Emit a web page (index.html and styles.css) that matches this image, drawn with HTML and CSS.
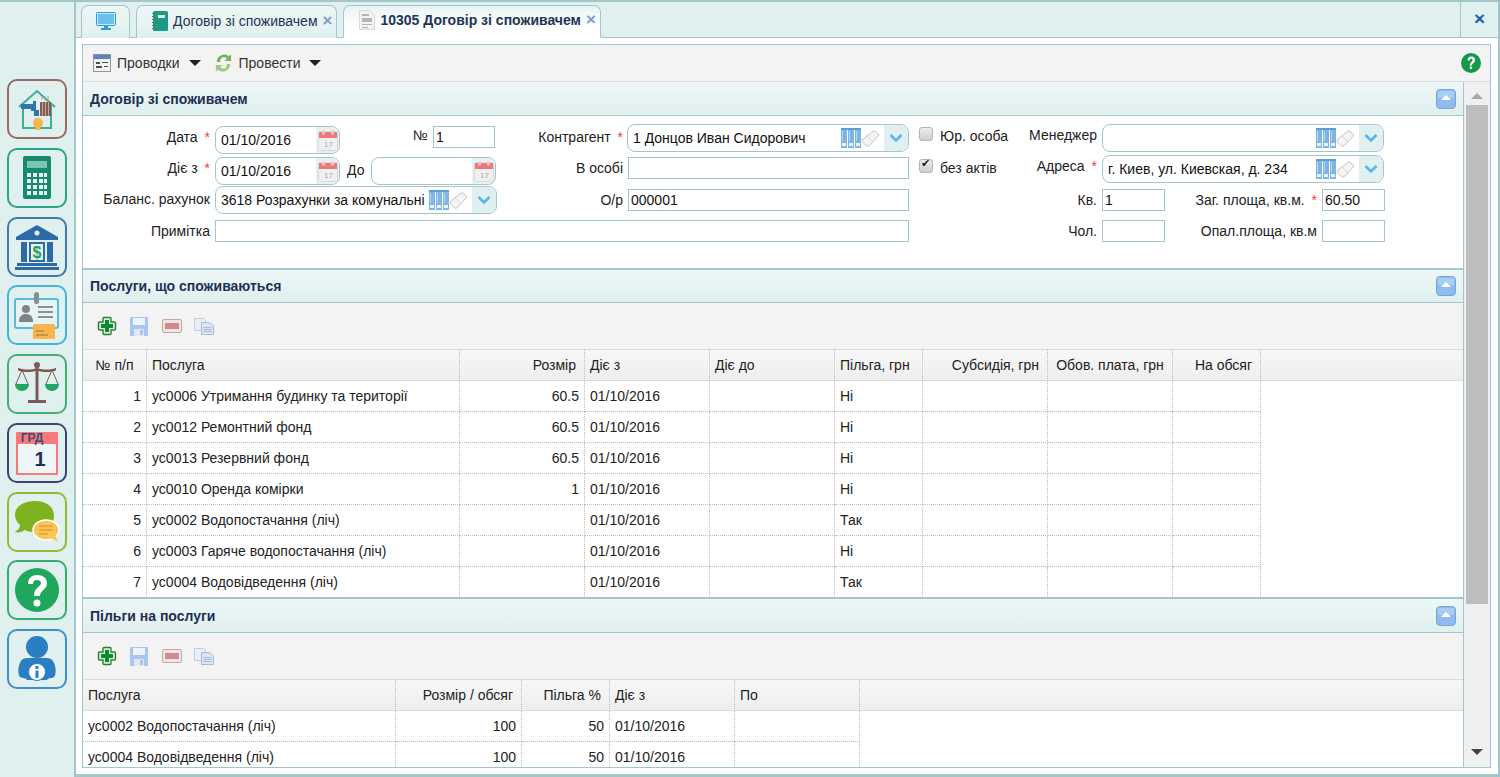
FILE: index.html
```html
<!DOCTYPE html>
<html lang="uk">

<head>
    <meta charset="utf-8">
    <title>10305 Договір зі споживачем</title>
    <link rel="stylesheet" href="styles.css">
</head>

<body>
    <!-- Shared small icons -->
    <svg class="defs" width="0" height="0">
        <symbol id="i-binders" viewBox="0 0 20 20">
            <path d="M0 0h20v2H0z" fill="#5a9fd8"/>
            <path d="M0 2h6v18H0zM7 2h6v18H7zM14 2h6v18h-6z" fill="#7db5e6"/>
            <path d="M1 3h1v10H1zM8 3h1v10H8zM15 3h1v10h-1z" fill="#b9d9f3"/>
            <path d="M1 15h4v3H1zM8 15h4v3H8zM15 15h4v3h-4z" fill="#eaf4fb"/>
        </symbol>
        <symbol id="i-eraser" viewBox="0 0 20 20">
            <path d="M13 2.5l5 4.500-9.500 10.500a2.500 2.500 0 0 1-3.500 0l-3-3a2.500 2.500 0 0 1 0-3.500z" fill="#f4f4f4" stroke="#c2c2c2"/>
            <path d="M6 8l6 6" stroke="#d6d6d6" fill="none"/>
        </symbol>
        <symbol id="i-chevron" viewBox="0 0 14 10">
            <path d="M1.500 2l5.500 5.500L12.500 2" fill="none" stroke="#58b4ea" stroke-width="2.600"/>
        </symbol>
        <symbol id="i-cal" viewBox="0 0 20 21">
            <rect x="0.500" y="2" width="19" height="18.500" rx="1" fill="#f0f0f0" stroke="#d8d8d8"/>
            <path d="M1 2h18v6H1z" fill="#e87b7b"/>
            <path d="M4 0.500h3v4H4zM13 0.500h3v4h-3z" fill="#f4c0c0"/>
            <text x="6" y="17" font-size="8" font-family="Liberation Sans, sans-serif" fill="#a8a8a8">17</text>
        </symbol>
        <symbol id="i-plus" viewBox="0 0 20 20">
            <path d="M7 1.500h6a1 1 0 0 1 1 1V6h3.500a1 1 0 0 1 1 1v6a1 1 0 0 1-1 1H14v3.500a1 1 0 0 1-1 1H7a1 1 0 0 1-1-1V14H2.500a1 1 0 0 1-1-1V7a1 1 0 0 1 1-1H6V2.500a1 1 0 0 1 1-1z" fill="#d8ecd8" stroke="#2e7d3e" stroke-width="1.400"/>
            <path d="M8 4h4v4h4v4h-4v4H8v-4H4V8h4z" fill="#0c8a2c"/>
        </symbol>
        <symbol id="i-floppy" viewBox="0 0 18 19">
            <path d="M0 0h18v19H0z" fill="#a9c6f2"/>
            <path d="M3 1h12v7H3z" fill="#eef4fc"/>
            <path d="M4 12h10v7H4z" fill="#dfe8f5"/>
            <path d="M10 13h3v5h-3z" fill="#a9c6f2"/>
        </symbol>
        <symbol id="i-minus" viewBox="0 0 20 14">
            <rect x="0.500" y="0.500" width="19" height="13" rx="1.500" fill="#f2e4e4" stroke="#c9a6a6"/>
            <path d="M3 4h14v6H3z" fill="#cf8a90"/>
        </symbol>
        <symbol id="i-copy" viewBox="0 0 20 17">
            <path d="M0.500 0.500h9l2 2v10H0.500z" fill="#e9eef8" stroke="#c3cde0"/>
            <path d="M7.500 4.500h8l4 3.500v8.500h-12z" fill="#dbe5f6" stroke="#a9b9d6"/>
            <path d="M9.500 9.500h8M9.500 11.500h8M9.500 13.500h8" stroke="#a9b9d6"/>
        </symbol>
        <symbol id="i-collapse" viewBox="0 0 20 20">
            <rect x="0.500" y="0.500" width="19" height="19" rx="3.500" fill="#8fbcf0" stroke="#7aa5dc"/>
            <path d="M2 2h16v7H2z" fill="#a9cdf5"/>
            <path d="M10 6l5 5H5z" fill="#fff"/>
        </symbol>
    </svg>

    <div class="app">
        <!-- Left menu -->
        <nav class="sidebar">
            <a class="side-btn side-house">
                <svg viewBox="0 0 48 48" width="48" height="48">
                    <path d="M6 22L24 6l18 16" fill="none" stroke="#3fae98" stroke-width="2"/>
                    <path d="M10 19v24h28V19" fill="none" stroke="#3fae98" stroke-width="2"/>
                    <path d="M8 19h12v-3h3v9h3v6h-5v-5h-3v-2H8z" fill="#2f74ad"/>
                    <path d="M23 33l2 4h-4z" fill="#2f74ad"/>
                    <path d="M27 17h11v14H27z" fill="#875a52"/>
                    <path d="M29.500 17v14M32.500 17v14M35.500 17v14" stroke="#c2a79f"/>
                    <path d="M29 15v-4M32 15v-4M35 15v-4" stroke="#b89a92"/>
                    <circle cx="25" cy="38" r="5" fill="#f6b54e"/>
                    <path d="M22.500 41h5v4h-5z" fill="#f6b54e"/>
                </svg>
            </a>
            <a class="side-btn side-calc">
                <svg viewBox="0 0 48 48" width="48" height="48">
                    <rect x="10" y="2" width="28" height="43" rx="2" fill="#17896f"/>
                    <path d="M14 7h20v7H14z" fill="#7cc4b2"/>
                    <path d="M14 19h4v4h-4zM20 19h4v4h-4zM26 19h4v4h-4zM31 19h3v4h-3zM14 25h4v4h-4zM20 25h4v4h-4zM26 25h4v4h-4zM31 25h3v4h-3zM14 31h4v4h-4zM20 31h4v4h-4zM26 31h4v4h-4zM31 31h3v4h-3zM14 37h4v4h-4zM20 37h4v4h-4zM26 37h4v4h-4zM31 37h3v4h-3z" fill="#e6f4f0"/>
                </svg>
            </a>
            <a class="side-btn side-bank">
                <svg viewBox="0 0 48 48" width="48" height="48">
                    <path d="M24 2L3 14v3h42v-3z" fill="#2f6aa8"/>
                    <circle cx="24" cy="10" r="2.500" fill="#e6f2f2"/>
                    <path d="M8 19h6v20H8zM34 19h6v20h-6zM16 19h16v20H16z" fill="#2f6aa8"/>
                    <path d="M18 21h12v16H18z" fill="#e6f2f2"/>
                    <path d="M4 40h40v3H4zM2 44h44v3H2z" fill="#2f6aa8"/>
                    <text x="24" y="35" text-anchor="middle" font-size="16" font-weight="700" font-family="Liberation Sans, sans-serif" fill="#2a9d5c">$</text>
                </svg>
            </a>
            <a class="side-btn side-card">
                <svg viewBox="0 0 48 48" width="48" height="48">
                    <rect x="2" y="8" width="43" height="29" rx="2" fill="#e6f4f6" stroke="#55bcdc" stroke-width="2"/>
                    <rect x="21" y="1" width="5" height="12" rx="2.500" fill="#8a8f93"/>
                    <circle cx="13" cy="18" r="4" fill="#7f8488"/>
                    <path d="M6 31c0-6 3-8 7-8s7 2 7 8z" fill="#7f8488"/>
                    <path d="M25 16h15M25 21h15M25 26h15" stroke="#8a8f93" stroke-width="2"/>
                    <rect x="20" y="33" width="22" height="15" rx="1.500" fill="#f6b54e"/>
                    <path d="M23 40h8M23 44h12" stroke="#b78a3a" stroke-width="1.500"/>
                </svg>
            </a>
            <a class="side-btn side-law">
                <svg viewBox="0 0 48 48" width="48" height="48">
                    <circle cx="24" cy="5" r="3" fill="#7d5a55"/>
                    <path d="M22.500 6h3v34h-3zM15 40h18v3H15z" fill="#7d5a55"/>
                    <path d="M5 8c8 2 12 2 19 0 7 2 11 2 19 0v2.500c-8 2-12 2-19 0-7 2-11 2-19 0z" fill="#7d5a55"/>
                    <path d="M9 10L3 24M9 10l6 14M39 10l-6 14M39 10l6 14" stroke="#7d5a55" fill="none"/>
                    <path d="M2 24h14c0 4-3 7-7 7s-7-3-7-7zM32 24h14c0 4-3 7-7 7s-7-3-7-7z" fill="#24a566"/>
                </svg>
            </a>
            <a class="side-btn side-cal">
                <svg viewBox="0 0 48 48" width="48" height="48">
                    <rect x="0" y="0" width="42" height="43" rx="1" transform="translate(3 3)" fill="#f67a7a"/>
                    <path d="M5 15h38v29H5z" fill="#eef5f6"/>
                    <text x="19" y="13" text-anchor="middle" font-size="12" font-family="Liberation Sans, sans-serif" font-weight="700" fill="#3b4a78">ГРД</text>
                    <text x="27" y="37" text-anchor="middle" font-size="20" font-family="Liberation Sans, sans-serif" font-weight="700" fill="#1f2f57">1</text>
                </svg>
            </a>
            <a class="side-btn side-chat">
                <svg viewBox="0 0 48 48" width="48" height="48">
                    <path d="M22 3c12 0 19 6 19 15 0 3-1 5-2 7H26c-4 3-5 7-5 9-4 0-7-1-9-2-3 2-7 3-10 2 3-2 5-4 5-7-3-3-5-6-5-10C2 9 10 3 22 3z" fill="#7cb31e"/>
                    <ellipse cx="33" cy="32" rx="13" ry="10" fill="#f8c656" stroke="#fff" stroke-width="1.500"/>
                    <path d="M38 40l7 4-3-7z" fill="#f8c656"/>
                    <path d="M26 28h14M26 32h14M26 36h9" stroke="#e0a02e" stroke-width="1.500"/>
                </svg>
            </a>
            <a class="side-btn side-help">
                <svg viewBox="0 0 48 48" width="48" height="48">
                    <circle cx="24" cy="24" r="22" fill="#1fa75e"/>
                    <path d="M15 18c0-6 4-9 9-9 6 0 10 3 10 8 0 7-7 7-7 13h-6c0-9 7-9 7-13 0-2-2-3-4-3-3 0-4 2-4 4z" fill="#fff"/>
                    <circle cx="24" cy="37" r="3.500" fill="#fff"/>
                </svg>
            </a>
            <a class="side-btn side-user">
                <svg viewBox="0 0 48 48" width="48" height="48">
                    <circle cx="24" cy="12" r="11" fill="#2a7fc4"/>
                    <path d="M7 42c-3-3-2-15 3-18 3-1.500 6-1 14-1s11-.5 14 1c5 3 6 15 3 18-2 2-5 0-7 3H14c-2-3-5-1-7-3z" fill="#2a7fc4"/>
                    <circle cx="24" cy="37" r="8.500" fill="#fff" stroke="#2a7fc4" stroke-width="1"/>
                    <path d="M22.500 35.500h3V43h-3zM22.500 31h3v3h-3z" fill="#2a7fc4"/>
                </svg>
            </a>
        </nav>

        <main class="main">
            <!-- Tabs -->
            <div class="tabstrip">
                <a class="tab tab-home">
                    <svg viewBox="0 0 20 18" width="20" height="18">
                        <rect x="0.500" y="0.500" width="19" height="13" rx="1" fill="#cdeaf8" stroke="#2f9bd8"/>
                        <path d="M2 2h16v10H2z" fill="#6cc0ea"/>
                        <path d="M8 14h4v2H8zM5 16h10v2H5z" fill="#2f9bd8"/>
                    </svg>
                </a>
                <a class="tab">
                    <svg viewBox="0 0 16 20" width="16" height="20">
                        <rect x="1" y="0" width="15" height="20" rx="1.500" fill="#1d9a86"/>
                        <path d="M0 2h3v1H0zM0 5h3v1H0zM0 8h3v1H0zM0 11h3v1H0zM0 14h3v1H0zM0 17h3v1H0z" fill="#5b7a76"/>
                        <path d="M6 4h7v3H6z" fill="#d8f0ea"/>
                    </svg>
                    <span class="tab-text">Договір зі споживачем</span>
                    <span class="tab-close">×</span>
                </a>
                <a class="tab tab-active">
                    <svg viewBox="0 0 16 20" width="16" height="20">
                        <path d="M0.500 0.500h10l5 5v14H0.500z" fill="#f3f3f3" stroke="#d8d8d8"/>
                        <path d="M3 4h7v2H3zM3 8h10v4H3zM3 14h10v1H3zM3 17h6v1H3z" fill="#b4b4b4"/>
                    </svg>
                    <span class="tab-text">10305 Договір зі споживачем</span>
                    <span class="tab-close">×</span>
                </a>
                <a class="strip-close">×</a>
            </div>

            <div class="doc">
                <div class="doc-toolbar">
                    <a class="tool">
                        <svg viewBox="0 0 18 18" width="18" height="18">
                            <rect x="0.500" y="0.500" width="17" height="17" fill="#f2f2f2" stroke="#8e97a6"/>
                            <path d="M1 1h16v4H1z" fill="#5e80c0"/>
                            <path d="M3 8h4v2H3zM9 8h6v1H9zM3 12h6v2H3zM11 12h4v1h-4z" fill="#4d4d4d"/>
                        </svg>
                        <span>Проводки</span>
                        <i class="caret"></i>
                    </a>
                    <a class="tool tool-post">
                        <svg viewBox="0 0 20 20" width="19" height="20">
                            <path d="M3 9c0-5 4-8 8-8 2 0 3.500 1 4.500 2L18 1v7h-7l2.500-2.500C12.500 4.500 11 4 10 4 8 4 6.500 6 6.500 9z" fill="#74b45c"/>
                            <path d="M17 11c0 5-4 8-8 8-2 0-3.500-1-4.500-2L2 19v-7h7l-2.500 2.500C7.500 15.500 9 16 10 16c2 0 3.500-2 3.500-5z" fill="#9ccb86"/>
                        </svg>
                        <span>Провести</span>
                        <i class="caret"></i>
                    </a>
                    <svg class="tool-help" viewBox="0 0 20 20" width="20" height="20">
                        <circle cx="10" cy="10" r="10" fill="#14984c"/>
                        <path d="M6.500 7.500C6.500 5 8 3.500 10.500 3.500S14 5 14 7c0 3-3 3-3 5.500H8.800C8.800 9 11.500 9 11.500 7.200c0-.8-.4-1.500-1.200-1.500-1 0-1.500.7-1.500 1.800z" fill="#fff"/>
                        <rect x="8.800" y="13.500" width="2.300" height="2.500" fill="#fff"/>
                    </svg>
                </div>

                <div class="doc-body">
                    <div class="sections">

                        <!-- Contract details -->
                        <section class="section">
                            <header class="section-head">
                                <h3>Договір зі споживачем</h3>
                                <svg class="collapse" width="20" height="20"><use href="#i-collapse"/></svg>
                            </header>
                            <div class="form">
                                <label class="lbl">Дата <b>*</b></label>
                                <div class="field date mt2"><input value="01/10/2016"><span class="cal-btn"><svg width="20" height="21"><use href="#i-cal"/></svg></span></div>
                                <div class="num-cell span2 mt2"><label class="lbl-num">№</label><input class="txt num" value="1"></div>
                                <label class="lbl">Контрагент <b>*</b></label>
                                <div class="field combo combo-left"><input value="1 Донцов Иван Сидорович"><svg class="ic" width="20" height="20"><use href="#i-binders"/></svg><svg class="ic" width="20" height="20"><use href="#i-eraser"/></svg><span class="drop"><svg width="14" height="10"><use href="#i-chevron"/></svg></span></div>
                                <div class="chk-cell"><label class="chk"><input type="checkbox">Юр. особа</label><label class="lbl-inline">Менеджер</label></div>
                                <div class="field combo span3"><input value=""><svg class="ic" width="20" height="20"><use href="#i-binders"/></svg><svg class="ic" width="20" height="20"><use href="#i-eraser"/></svg><span class="drop"><svg width="14" height="10"><use href="#i-chevron"/></svg></span></div>

                                <label class="lbl">Діє з <b>*</b></label>
                                <div class="field date mt2"><input value="01/10/2016"><span class="cal-btn"><svg width="20" height="21"><use href="#i-cal"/></svg></span></div>
                                <label class="lbl-do">До</label>
                                <div class="field date mt2"><input value=""><span class="cal-btn"><svg width="20" height="21"><use href="#i-cal"/></svg></span></div>
                                <label class="lbl">В особі</label>
                                <input class="txt mt2 wide" value="">
                                <div class="chk-cell"><label class="chk chk-2"><input type="checkbox" checked>без актів</label><label class="lbl-inline">Адреса <b>*</b></label></div>
                                <div class="field combo span3"><input value="г. Киев, ул. Киевская, д. 234"><svg class="ic" width="20" height="20"><use href="#i-binders"/></svg><svg class="ic" width="20" height="20"><use href="#i-eraser"/></svg><span class="drop"><svg width="14" height="10"><use href="#i-chevron"/></svg></span></div>

                                <label class="lbl">Баланс. рахунок</label>
                                <div class="field combo span3 balance"><input value="3618 Розрахунки за комунальні послуги"><svg class="ic" width="20" height="20"><use href="#i-binders"/></svg><svg class="ic" width="20" height="20"><use href="#i-eraser"/></svg><span class="drop"><svg width="14" height="10"><use href="#i-chevron"/></svg></span></div>
                                <label class="lbl lbl-low">О/р</label>
                                <input class="txt mt3 wide" value="000001">
                                <label class="lbl lbl-low">Кв.</label>
                                <input class="txt mt3 small" value="1">
                                <label class="lbl lbl-low">Заг. площа, кв.м. <b>*</b></label>
                                <input class="txt mt3 small" value="60.50">

                                <label class="lbl lbl-low">Примітка</label>
                                <input class="txt mt3 note" value="">
                                <label class="lbl lbl-low">Чол.</label>
                                <input class="txt mt3 small" value="">
                                <label class="lbl lbl-low">Опал.площа, кв.м</label>
                                <input class="txt mt3 small" value="">
                            </div>
                        </section>

                        <!-- Services -->
                        <section class="section">
                            <header class="section-head head-short">
                                <h3>Послуги, що споживаються</h3>
                                <svg class="collapse" width="20" height="20"><use href="#i-collapse"/></svg>
                            </header>
                            <div class="grid-tools">
                                <svg class="gt-plus" width="20" height="20"><use href="#i-plus"/></svg>
                                <svg class="gt-floppy" width="18" height="19"><use href="#i-floppy"/></svg>
                                <svg class="gt-minus" width="20" height="14"><use href="#i-minus"/></svg>
                                <svg class="gt-copy" width="20" height="17"><use href="#i-copy"/></svg>
                            </div>
                            <table class="grid">
                                <colgroup>
                                    <col class="w64"><col class="w313"><col class="w125"><col class="w125"><col class="w125"><col class="w88"><col class="w125"><col class="w125"><col class="w88"><col>
                                </colgroup>
                                <thead>
                                    <tr>
                                        <th class="c">№ п/п</th><th>Послуга</th><th class="r">Розмір</th><th>Діє з</th><th>Діє до</th><th>Пільга, грн</th><th class="r">Субсидія, грн</th><th class="c">Обов. плата, грн</th><th class="r">На обсяг</th><th class="fill"></th>
                                    </tr>
                                </thead>
                                <tbody>
                                    <tr><td class="n">1</td><td>ус0006 Утримання будинку та території</td><td class="n">60.5</td><td>01/10/2016</td><td></td><td>Ні</td><td></td><td></td><td></td></tr>
                                    <tr><td class="n">2</td><td>ус0012 Ремонтний фонд</td><td class="n">60.5</td><td>01/10/2016</td><td></td><td>Ні</td><td></td><td></td><td></td></tr>
                                    <tr><td class="n">3</td><td>ус0013 Резервний фонд</td><td class="n">60.5</td><td>01/10/2016</td><td></td><td>Ні</td><td></td><td></td><td></td></tr>
                                    <tr><td class="n">4</td><td>ус0010 Оренда комірки</td><td class="n">1</td><td>01/10/2016</td><td></td><td>Ні</td><td></td><td></td><td></td></tr>
                                    <tr><td class="n">5</td><td>ус0002 Водопостачання (ліч)</td><td class="n"></td><td>01/10/2016</td><td></td><td>Так</td><td></td><td></td><td></td></tr>
                                    <tr><td class="n">6</td><td>ус0003 Гаряче водопостачання (ліч)</td><td class="n"></td><td>01/10/2016</td><td></td><td>Ні</td><td></td><td></td><td></td></tr>
                                    <tr class="last"><td class="n">7</td><td>ус0004 Водовідведення (ліч)</td><td class="n"></td><td>01/10/2016</td><td></td><td>Так</td><td></td><td></td><td></td></tr>
                                </tbody>
                            </table>
                        </section>

                        <!-- Benefits -->
                        <section class="section section-end">
                            <header class="section-head">
                                <h3>Пільги на послуги</h3>
                                <svg class="collapse" width="20" height="20"><use href="#i-collapse"/></svg>
                            </header>
                            <div class="grid-tools">
                                <svg class="gt-plus" width="20" height="20"><use href="#i-plus"/></svg>
                                <svg class="gt-floppy" width="18" height="19"><use href="#i-floppy"/></svg>
                                <svg class="gt-minus" width="20" height="14"><use href="#i-minus"/></svg>
                                <svg class="gt-copy" width="20" height="17"><use href="#i-copy"/></svg>
                            </div>
                            <table class="grid">
                                <colgroup>
                                    <col class="w313"><col class="w126"><col class="w88"><col class="w125"><col class="w125"><col>
                                </colgroup>
                                <thead>
                                    <tr>
                                        <th>Послуга</th><th class="r">Розмір / обсяг</th><th class="r">Пільга %</th><th>Діє з</th><th>По</th><th class="fill"></th>
                                    </tr>
                                </thead>
                                <tbody>
                                    <tr><td>ус0002 Водопостачання (ліч)</td><td class="n">100</td><td class="n">50</td><td>01/10/2016</td><td></td></tr>
                                    <tr><td>ус0004 Водовідведення (ліч)</td><td class="n">100</td><td class="n">50</td><td>01/10/2016</td><td></td></tr>
                                </tbody>
                            </table>
                        </section>
                    </div>

                    <!-- Scrollbar -->
                    <div class="scrollbar">
                        <span class="sb-up"></span>
                        <span class="sb-thumb"></span>
                        <span class="sb-down"></span>
                    </div>
                </div>
            </div>
        </main>
    </div>
</body>

</html>
```

FILE: styles.css
```css
* {
    box-sizing: border-box;
}

html,
body {
    margin: 0;
    height: 100%;
    overflow: hidden;
}

body {
    font-family: "Liberation Sans", Arial, sans-serif;
    font-size: 14px;
    color: #222;
    background-color: #dff0ef;
}

.defs {
    position: absolute;
}

.app {
    display: flex;
    height: 777px;
    border-top: 2px solid #a3c6ca;
}

/* Left menu */
.sidebar {
    width: 76px;
    flex: none;
    display: flex;
    flex-direction: column;
    gap: 8.750px;
    padding: 77px 0 0 7px;
    border-right: 2px solid #a3c6ca;
}

.side-btn {
    width: 60px;
    height: 60px;
    flex: none;
    display: flex;
    align-items: center;
    justify-content: center;
    border: 2px solid #888;
    border-radius: 10px;
}

.side-house { border-color: #9a6a66; }
.side-calc { border-color: #2aa58a; }
.side-bank { border-color: #3f78b5; }
.side-card { border-color: #45b4dc; }
.side-law { border-color: #45ad7a; }
.side-cal { border-color: #3a4577; }
.side-chat { border-color: #8cbc3c; }
.side-help { border-color: #35ad72; }
.side-user { border-color: #3f8ed0; }

/* Main area */
.main {
    flex: 1;
    min-width: 0;
    display: flex;
    flex-direction: column;
    background-color: #fff;
    border-right: 2px solid #a3c6ca;
    border-bottom: 3px solid #a3c6ca;
}

.tabstrip {
    height: 36px;
    flex: none;
    display: flex;
    align-items: flex-end;
    gap: 6px;
    padding-left: 5px;
    background-color: #dff0ef;
    border-bottom: 1px solid #a3c6ca;
}

.tab {
    height: 33px;
    margin-bottom: -1px;
    display: flex;
    align-items: center;
    gap: 5px;
    padding: 0 4px 3px 15px;
    border: 1px solid #a3c6ca;
    border-bottom: none;
    border-radius: 7px 7px 0 0;
    background: linear-gradient(#eef7f7, #dff0ef);
    color: #1f3555;
}

.tab-home {
    width: 49px;
    padding: 0 0 3px 0;
    justify-content: center;
}

.tab-active {
    background: linear-gradient(#e8f4f4, #fff 70%);
    border-bottom: 1px solid #fff;
    font-weight: 700;
}

.tab-close {
    color: #7e9cc8;
    font-size: 17px;
    font-weight: 700;
    line-height: 14px;
}

.strip-close {
    margin-left: auto;
    width: 38px;
    height: 35px;
    text-align: center;
    line-height: 33px;
    color: #1e5fa8;
    font-size: 19px;
    font-weight: 700;
    border-left: 1px solid #a3c6ca;
}

/* Document box */
.doc {
    flex: 1;
    min-height: 0;
    display: flex;
    flex-direction: column;
    margin: 6px 7px 6px 6px;
    border: 1px solid #a3c6ca;
}

.doc-toolbar {
    height: 37px;
    flex: none;
    display: flex;
    align-items: center;
    padding: 0 9px 0 10px;
    background-color: #f3f3f3;
    border-bottom: 1px solid #dcdcdc;
}

.tool {
    display: flex;
    align-items: center;
    gap: 6px;
    color: #333;
}

.tool-post {
    margin-left: 13px;
}

.caret {
    width: 0;
    height: 0;
    margin-left: 3px;
    border-left: 6px solid transparent;
    border-right: 6px solid transparent;
    border-top: 6px solid #222;
}

.tool-help {
    margin-left: auto;
}

.doc-body {
    flex: 1;
    min-height: 0;
    display: flex;
}

.sections {
    flex: 1;
    min-width: 0;
    overflow: hidden;
}

.section {
    border-bottom: 2px solid #a3c6ca;
}

.section-end {
    border-bottom: none;
}

.section-head {
    height: 34px;
    display: flex;
    align-items: center;
    justify-content: space-between;
    padding: 0 7px 0 7px;
    background: linear-gradient(#eef7f7, #dff0ee);
    border-bottom: 1px solid #a3c6ca;
}

.head-short {
    height: 33px;
}

.section-head h3 {
    margin: 0;
    font-size: 14px;
    color: #1c2f55;
}

/* Form */
.form {
    display: grid;
    grid-template-columns: 132px 125px 31px 125px 132px 281px 193px 64px 156px 63px;
    grid-auto-rows: 31px;
    height: 152px;
    padding-top: 8px;
    background-color: #fff;
}

.lbl {
    text-align: right;
    padding: 5px 5px 0 0;
    color: #222;
    white-space: nowrap;
}

.lbl-low {
    padding-top: 6px;
}

.lbl b,
.lbl-inline b {
    color: #f33;
    font-weight: 400;
    margin-left: 3px;
}

.lbl-do {
    padding: 7px 0 0 7px;
}

.field {
    display: flex;
    align-items: center;
    height: 28px;
    border: 1px solid #a3c6ca;
    border-radius: 8px;
    overflow: hidden;
    background-color: #fff;
}

.field input {
    flex: 1;
    min-width: 0;
    height: 100%;
    border: none;
    outline: none;
    padding: 0 0 0 5px;
    font: inherit;
    color: #111;
    background: transparent;
}

.date {
    width: 125px;
}

.cal-btn {
    width: 23px;
    height: 100%;
    flex: none;
    display: flex;
    align-items: center;
    justify-content: center;
    background-color: #e6f2f2;
}

.combo .ic {
    flex: none;
    margin-top: -1px;
}

.drop {
    width: 24px;
    height: 100%;
    flex: none;
    display: flex;
    align-items: center;
    justify-content: center;
    margin-left: 3px;
    background-color: #e0f0f0;
}

.combo-left {
    margin-left: -1px;
}

.balance {
    width: 282px;
}

.span2 {
    grid-column: span 2;
}

.span3 {
    grid-column: span 3;
    width: 282px;
}

.mt2 {
    margin-top: 2px;
}

.mt3 {
    margin-top: 3px;
}

.txt {
    height: 22px;
    border: 1px solid #a3c6ca;
    outline: none;
    padding: 0 2px;
    font: inherit;
    color: #111;
    background-color: #fff;
}

.wide {
    width: 281px;
}

.small {
    width: 63px;
}

.note {
    grid-column: span 5;
    width: 694px;
}

.num-cell {
    display: flex;
    justify-content: flex-end;
    align-items: flex-start;
    gap: 5px;
    padding-right: 1px;
}

.lbl-num {
    line-height: 18px;
}

.num {
    width: 62px;
}

.chk-cell {
    display: flex;
    justify-content: space-between;
    padding: 2px 5px 0 10px;
}

.chk {
    display: flex;
    align-items: flex-start;
    gap: 7px;
    line-height: 20px;
}

.chk-2 {
    padding-top: 1px;
}

.chk input {
    appearance: none;
    width: 14px;
    height: 14px;
    margin: 1px 0 0 0;
    border: 1px solid #b5b5b5;
    border-radius: 3px;
    background: linear-gradient(#ececec, #cfcfcf);
    position: relative;
}

.chk input:checked::after {
    content: "✔";
    position: absolute;
    top: -3px;
    left: 1px;
    font-family: "DejaVu Sans", sans-serif;
    font-size: 11px;
    color: #222;
}

.lbl-inline {
    line-height: 18px;
    white-space: nowrap;
}

/* Grid toolbar */
.grid-tools {
    height: 46px;
    display: flex;
    align-items: center;
    padding-left: 14px;
    background-color: #f3f3f3;
}

.gt-floppy {
    margin-left: 13px;
}

.gt-minus {
    margin-left: 14px;
}

.gt-copy {
    margin-left: 12px;
}

/* Tables */
.grid {
    width: 100%;
    table-layout: fixed;
    border-collapse: separate;
    border-spacing: 0;
    background-color: #fff;
}

.w64 { width: 64px; }
.w88 { width: 88px; }
.w125 { width: 125px; }
.w126 { width: 126px; }
.w313 { width: 313px; }

.grid th {
    height: 32px;
    padding: 0 5px;
    font-weight: 400;
    text-align: left;
    color: #222;
    white-space: nowrap;
    background: linear-gradient(#f7f7f7, #eeeeee);
    border-top: 1px solid #dcdcdc;
    border-bottom: 1px solid #dcdcdc;
    border-right: 1px dotted #bbb;
}

.grid th.c {
    text-align: center;
}

.grid th.r {
    text-align: right;
    padding-right: 8px;
}

.grid th.fill {
    border-right: none;
}

.grid td {
    height: 31px;
    padding: 0 5px;
    color: #222;
    white-space: nowrap;
    overflow: hidden;
    border-right: 1px dotted #bbb;
    border-bottom: 1px dotted #bbb;
}

.grid td.n {
    text-align: right;
}

.grid .last td {
    height: 30px;
    border-bottom: none;
}

/* Fake scrollbar */
.scrollbar {
    width: 27px;
    flex: none;
    display: flex;
    flex-direction: column;
    align-items: center;
    background-color: #f0f0f0;
    border-left: 1px solid #a3c6ca;
}

.sb-up {
    width: 0;
    height: 0;
    margin: 11px 0 6px;
    border-left: 6px solid transparent;
    border-right: 6px solid transparent;
    border-bottom: 6px solid #a8a8a8;
}

.sb-thumb {
    width: 22px;
    height: 499px;
    background-color: #bdbdbd;
}

.sb-down {
    width: 0;
    height: 0;
    margin-top: auto;
    margin-bottom: 12px;
    border-left: 6px solid transparent;
    border-right: 6px solid transparent;
    border-top: 6px solid #444;
}
```
